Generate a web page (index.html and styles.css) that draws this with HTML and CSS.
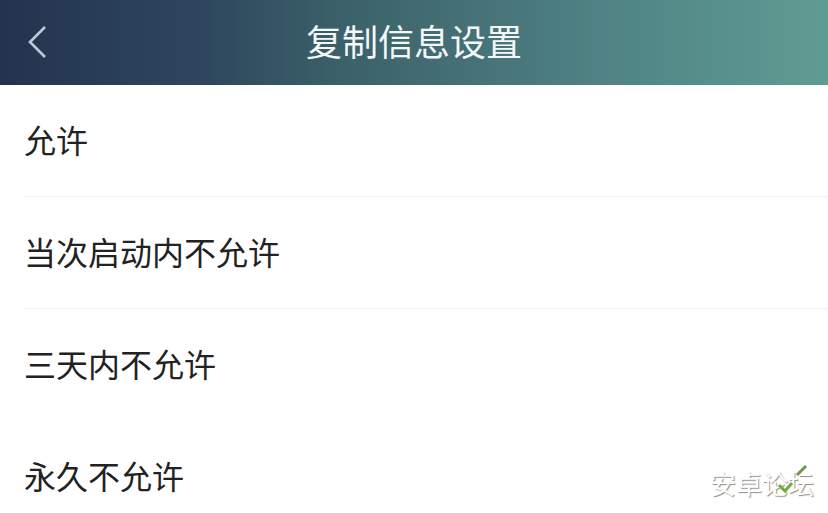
FILE: index.html
```html
<!DOCTYPE html>
<html lang="zh-CN">

<head>
    <meta charset="UTF-8">
    <meta name="viewport" content="width=device-width, initial-scale=1.0">
    <title>复制信息设置</title>
    <link rel="stylesheet" href="styles.css">
</head>

<body>
    <!-- Header -->
    <header class="header">
        <a href="#" class="back-btn" aria-label="返回">
            <svg width="20" height="34" viewBox="0 0 20 34" fill="none">
                <path d="M18 2 L3 17 L18 32" stroke="#bccbdc" stroke-width="2.6" />
            </svg>
        </a>
        <h1 class="title">复制信息设置</h1>
    </header>

    <ul class="options">
        <li class="option">允许</li>
        <li class="option">当次启动内不允许</li>
        <li class="option">三天内不允许</li>
        <li class="option">永久不允许</li>
    </ul>

    <!-- Watermark -->
    <div class="watermark">
        <span class="watermark-text">安卓论坛</span>
        <svg class="watermark-leaf" width="36" height="36" viewBox="0 0 36 36" fill="none">
            <path d="M22 13 L31 4" stroke="#6d9a4f" stroke-width="3" />
            <path d="M4 23 L10 29 L17 21" stroke="#69b044" stroke-width="3" />
        </svg>
    </div>
</body>

</html>
```

FILE: styles.css
```css
body {
    font-family: "Noto Sans CJK SC", "Liberation Sans", sans-serif;
    background-color: #fff;
    margin: 0;
    padding: 0;
    height: 513px;
    overflow: hidden;
    position: relative;
}

.header {
    box-sizing: border-box;
    height: 85px;
    padding-bottom: 6px;
    display: flex;
    justify-content: center;
    align-items: center;
    position: relative;
    background: linear-gradient(90deg, #24334f 0%, #2e475e 25%, #3a5f68 40%, #4f8284 72%, #5f9c93 100%);
}

.back-btn {
    position: absolute;
    left: 27px;
    top: 25px;
    display: flex;
}

.title {
    margin: 0;
    font-size: 36px;
    font-weight: 400;
    color: #f4f7f7;
}

.options {
    list-style: none;
    margin: 0;
    padding: 0 0 0 24px;
}

.option {
    box-sizing: border-box;
    height: 112px;
    padding-bottom: 4px;
    display: flex;
    align-items: center;
    border-bottom: 1px solid #eeeeee;
    font-size: 32px;
    color: #222;
}

.option:nth-child(n+3) {
    border-bottom-color: transparent;
}

/* Watermark */
.watermark {
    position: absolute;
    left: 710px;
    top: 465px;
}

.watermark-text {
    font-size: 26px;
    line-height: 36px;
    color: #fff;
    text-shadow: 1px 1px 1px #8f8f8f;
}

.watermark-leaf {
    position: absolute;
    left: 65px;
    top: -3px;
}
```
